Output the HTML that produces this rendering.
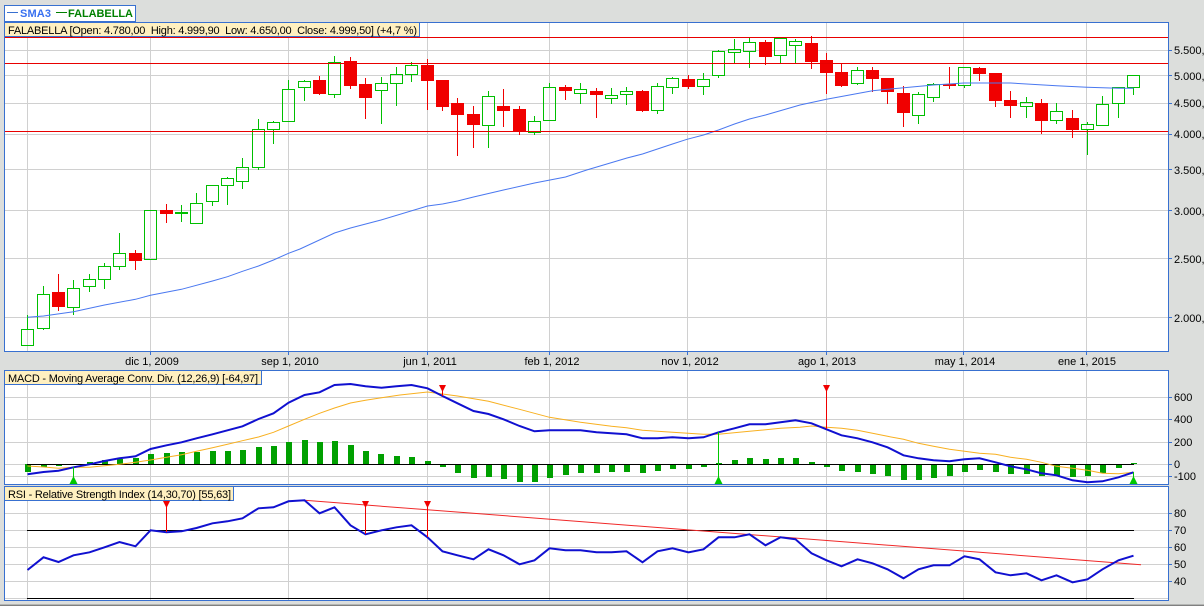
<!DOCTYPE html>
<html><head><meta charset="utf-8"><style>
html,body{margin:0;padding:0;background:#dcdedc;width:1204px;height:606px;overflow:hidden}
svg{display:block}
text{font-family:"Liberation Sans",sans-serif;font-size:11px;fill:#000}
</style></head><body>
<svg width="1204" height="606" viewBox="0 0 1204 606" xmlns="http://www.w3.org/2000/svg">
<rect width="1204" height="606" fill="#dcdedc"/>
<rect y="604" width="1204" height="1" fill="#b4b6b4"/><rect y="605" width="1204" height="1" fill="#808080"/>
<!-- panels -->
<g fill="#fff" stroke="#3870d0" shape-rendering="crispEdges">
<rect x="4.5" y="22.5" width="1164" height="329"/>
<rect x="4.5" y="370.5" width="1164" height="114"/>
<rect x="4.5" y="486.5" width="1164" height="114"/>
<rect x="4.5" y="5.5" width="131" height="16"/>
</g>
<!-- grid -->
<g stroke="#d0d0d0" fill="none" shape-rendering="crispEdges">
<path d="M5 50.5H1168M5 75.5H1168M5 103.5H1168M5 134.5H1168M5 169.5H1168M5 210.5H1168M5 258.5H1168M5 317.5H1168"/>
<path d="M27.5 23V351M150.5 23V351M288.5 23V351M427.5 23V351M549.5 23V351M687.5 23V351M826.5 23V351M963.5 23V351M1086.5 23V351"/>
<path d="M5 397.5H1168M5 419.5H1168M5 442.5H1168M5 464.5H1168M5 476.5H1168"/>
<path d="M27.5 371V484M150.5 371V484M288.5 371V484M427.5 371V484M549.5 371V484M687.5 371V484M826.5 371V484M963.5 371V484M1086.5 371V484"/>
<path d="M5 513.5H1168M5 530.5H1168M5 547.5H1168M5 564.5H1168M5 581.5H1168M5 598.5H1168"/>
<path d="M27.5 487V600M150.5 487V600M288.5 487V600M427.5 487V600M549.5 487V600M687.5 487V600M826.5 487V600M963.5 487V600M1086.5 487V600"/>
</g>
<!-- green candles -->
<path fill="none" stroke="#00bf00" shape-rendering="crispEdges" d="M27.5 315V329M27.5 329.5H33.5V345.5H21.5V329.5H27.5
M43.5 286V294M43.5 328V330M37.5 294.5H49.5V328.5H37.5Z
M73.5 280V288M73.5 307V315M67.5 288.5H79.5V307.5H67.5Z
M89.5 274V279M89.5 287V292M83.5 279.5H95.5V286.5H83.5Z
M104.5 263V266M104.5 279V289M98.5 266.5H110.5V279.5H98.5Z
M119.5 233V253M119.5 266V270M113.5 253.5H125.5V266.5H113.5Z
M144.5 210.5H156.5V259.5H144.5Z
M181.5 205V212M181.5 214V222M175.5 212.5H187.5V213.5H175.5Z
M196.5 193V203M196.5 223V224M190.5 203.5H202.5V223.5H190.5Z
M212.5 201V206M206.5 185.5H218.5V201.5H206.5Z
M227.5 177V178M227.5 185V205M221.5 178.5H233.5V185.5H221.5Z
M242.5 158V167M242.5 181V189M236.5 167.5H248.5V181.5H236.5Z
M258.5 119V129M258.5 167V170M252.5 129.5H264.5V167.5H252.5Z
M273.5 121V122M273.5 129V144M267.5 122.5H279.5V129.5H267.5Z
M288.5 80V89M282.5 89.5H294.5V121.5H282.5Z
M304.5 80V81M304.5 87V101M298.5 81.5H310.5V87.5H298.5Z
M334.5 56V62M334.5 94V98M328.5 62.5H340.5V94.5H328.5Z
M381.5 77V83M381.5 90V124M375.5 83.5H387.5V90.5H375.5Z
M396.5 67V74M396.5 83V106M390.5 74.5H402.5V83.5H390.5Z
M411.5 62V65M411.5 74V82M405.5 65.5H417.5V74.5H405.5Z
M488.5 91V96M488.5 125V148M482.5 96.5H494.5V125.5H482.5Z
M534.5 116V121M534.5 132V135M528.5 121.5H540.5V132.5H528.5Z
M549.5 83V87M543.5 87.5H555.5V120.5H543.5Z
M580.5 83V89M580.5 93V104M574.5 89.5H586.5V93.5H574.5Z
M611.5 88V95M611.5 98V104M605.5 95.5H617.5V98.5H605.5Z
M626.5 87V91M626.5 94V105M620.5 91.5H632.5V94.5H620.5Z
M657.5 83V86M657.5 110V114M651.5 86.5H663.5V110.5H651.5Z
M672.5 77V78M672.5 87V94M666.5 78.5H678.5V87.5H666.5Z
M703.5 73V79M703.5 86V95M697.5 79.5H709.5V86.5H697.5Z
M718.5 50V51M718.5 75V78M712.5 51.5H724.5V75.5H712.5Z
M734.5 39V49M734.5 52V63M728.5 49.5H740.5V52.5H728.5Z
M749.5 38V42M749.5 51V68M743.5 42.5H755.5V51.5H743.5Z
M780.5 55V63M774.5 38.5H786.5V55.5H774.5Z
M795.5 39V41M795.5 45V63M789.5 41.5H801.5V45.5H789.5Z
M857.5 67V70M857.5 83V85M851.5 70.5H863.5V83.5H851.5Z
M918.5 92V94M918.5 115V124M912.5 94.5H924.5V115.5H912.5Z
M933.5 83V84M933.5 97V102M927.5 84.5H939.5V97.5H927.5Z
M964.5 85V88M958.5 67.5H970.5V85.5H958.5Z
M1026.5 97V102M1026.5 106V118M1020.5 102.5H1032.5V106.5H1020.5Z
M1056.5 103V111M1056.5 120V124M1050.5 111.5H1062.5V120.5H1050.5Z
M1087.5 122V124M1087.5 129V155M1081.5 124.5H1093.5V129.5H1081.5Z
M1102.5 96V104M1096.5 104.5H1108.5V125.5H1096.5Z
M1118.5 103V118M1112.5 87.5H1124.5V103.5H1112.5Z
M1133.5 87V95M1127.5 75.5H1139.5V87.5H1127.5Z"/>
<!-- red wicks -->
<path fill="none" stroke="#f00000" shape-rendering="crispEdges" d="M58.5 274V311M135.5 250V270M166.5 204V223M319.5 76V95M350.5 57V89M365.5 78V119M427.5 59V110M442.5 80V111M457.5 98V156M473.5 106V148M503.5 89V127M519.5 106V135M565.5 85V100M596.5 88V118M642.5 90V112M688.5 75V89M765.5 40V65M811.5 36V69M826.5 53V94M841.5 63V87M872.5 67V92M887.5 78V104M903.5 86V127M949.5 67V89M979.5 67V81M995.5 73V107M1010.5 91V118M1041.5 99V134M1072.5 110V138"/>
<!-- red bodies -->
<path fill="#f00000" shape-rendering="crispEdges" d="M52 292h13v15h-13zM129 253h13v8h-13zM160 210h13v4h-13zM313 80h13v14h-13zM344 61h13v25h-13zM359 84h13v14h-13zM421 65h13v16h-13zM436 80h13v27h-13zM451 103h13v12h-13zM467 114h13v11h-13zM497 106h13v5h-13zM513 109h13v22h-13zM559 87h13v4h-13zM590 91h13v4h-13zM636 91h13v20h-13zM682 79h13v8h-13zM759 42h13v15h-13zM805 43h13v19h-13zM820 60h13v13h-13zM835 72h13v14h-13zM866 70h13v9h-13zM881 78h13v14h-13zM897 93h13v20h-13zM943 84h13v2h-13zM973 68h13v6h-13zM989 73h13v28h-13zM1004 100h13v6h-13zM1035 103h13v18h-13zM1066 118h13v12h-13z"/>
<!-- SMA -->
<polyline fill="none" stroke="#4a78f0" stroke-width="1" points="27.5,317.3 43.5,316 73.5,311.7 104.5,305 135.5,299.3 150.5,295.3 181.5,289.3 212.5,281 227.5,276.7 242.5,271.3 258.5,266 273.5,260 288.5,253.3 300,249 334.5,233 350.5,228 381,220 427.5,206 442.5,204 457.5,201 473.5,197 503.5,190 534.5,183 565.5,177 586.7,170 627,158 642.5,154 672.5,144 687,139.3 703.5,135 718.5,130 734.5,124 749.5,119 765.5,115 800,105 826.5,99.3 872.5,90.7 887.5,89.3 933.5,85 964,83 1010.5,83 1056.5,85.7 1087,87.3 1118.5,88.3 1133.5,88.3"/>
<!-- support lines -->
<path stroke="#e80000" fill="none" shape-rendering="crispEdges" d="M5 37.5H1168M5 63.5H1168M5 131.5H1168"/>
<!-- MACD -->
<path fill="#00a000" shape-rendering="crispEdges" d="M25 464h6v8h-6zM41 464h6v3h-6zM56 464h6v2h-6zM87 462h6v2h-6zM102 460h6v4h-6zM117 459h6v5h-6zM133 458h6v6h-6zM148 454h6v10h-6zM164 453h6v11h-6zM179 452h6v12h-6zM194 452h6v12h-6zM210 451h6v13h-6zM225 451h6v13h-6zM240 450h6v14h-6zM256 447h6v17h-6zM271 446h6v18h-6zM286 442h6v22h-6zM302 440h6v24h-6zM317 442h6v22h-6zM332 441h6v23h-6zM348 445h6v19h-6zM363 451h6v13h-6zM378 454h6v10h-6zM394 456h6v8h-6zM409 457h6v7h-6zM425 461h6v3h-6zM440 464h6v3h-6zM455 464h6v9h-6zM471 464h6v14h-6zM486 464h6v13h-6zM501 464h6v15h-6zM517 464h6v18h-6zM532 464h6v18h-6zM547 464h6v14h-6zM563 464h6v11h-6zM578 464h6v9h-6zM594 464h6v9h-6zM609 464h6v8h-6zM624 464h6v8h-6zM640 464h6v9h-6zM655 464h6v7h-6zM670 464h6v5h-6zM686 464h6v5h-6zM701 464h6v3h-6zM716 463h6v1h-6zM732 460h6v4h-6zM747 458h6v6h-6zM763 459h6v5h-6zM778 458h6v6h-6zM793 458h6v6h-6zM809 462h6v2h-6zM824 464h6v3h-6zM839 464h6v7h-6zM855 464h6v8h-6zM870 464h6v10h-6zM885 464h6v12h-6zM901 464h6v16h-6zM916 464h6v16h-6zM931 464h6v14h-6zM947 464h6v12h-6zM962 464h6v8h-6zM977 464h6v6h-6zM993 464h6v8h-6zM1008 464h6v10h-6zM1024 464h6v10h-6zM1039 464h6v12h-6zM1054 464h6v12h-6zM1070 464h6v13h-6zM1085 464h6v12h-6zM1100 464h6v9h-6zM1116 464h6v4h-6zM1131 463h6v1h-6z"/>
<path stroke="#000" fill="none" shape-rendering="crispEdges" d="M27 464.5H1134"/>
<polyline fill="none" stroke="#f8b020" stroke-width="1" points="27.5,466 43.5,467 58.5,468.3 73.5,467.3 89.5,467.3 104.5,465.7 119.5,464.3 135.5,462.3 150.5,460 166.5,457.3 181.5,454.7 196.5,451.3 212.5,447.7 227.5,444.3 242.5,440.7 258.5,437 273.5,432.3 288.5,426 304.5,419.3 319.5,413.3 334.5,408 350.5,403 365.5,400.3 381.5,397.7 400,395 427.5,392 442.5,394 457.5,396 488.5,401.3 519.5,409.3 549.5,417.3 580.5,422.3 611.5,426.3 626.5,427.7 642.5,430.3 672.5,432.3 703.5,434.3 718.5,434.3 749.5,431.3 780.5,428.3 800,427.3 811.5,426 826.5,427.3 841.5,428.3 857.5,430.3 887.5,436.3 903.5,439.3 918.5,443.3 933.5,446.3 949.5,449.3 964.5,451.3 979.5,453.3 995.5,454.3 1010.5,457.3 1026.5,459.3 1041.5,462.3 1056.5,466.3 1072.5,468.3 1087.5,470.3 1102.5,473.3 1118.5,473.7 1133.5,472.3"/>
<polyline fill="none" stroke="#1010d0" stroke-width="2" points="27.5,474.3 43.5,472 58.5,470.7 73.5,467.3 89.5,464.3 104.5,461 119.5,458.3 135.5,456.3 150.5,449 166.5,445.3 181.5,442.3 196.5,438.3 212.5,434.3 227.5,430.3 242.5,426.3 258.5,419 273.5,413.3 288.5,402.7 304.5,395 319.5,392.3 334.5,385 350.5,384 365.5,386.3 381.5,387.7 396.5,386.3 411.5,385 427.5,388.3 442.5,396 457.5,403.3 473.5,411 488.5,414 503.5,419.3 519.5,426 534.5,431.3 549.5,430.3 565.5,430.3 580.5,430.3 596.5,432.3 611.5,433.3 626.5,434.3 642.5,438.3 657.5,438.3 672.5,437.3 688.5,438.3 703.5,437.3 718.5,432.3 734.5,428.3 749.5,424.3 765.5,424.3 780.5,422.3 795.5,420.3 811.5,423.3 826.5,429.3 841.5,435.3 857.5,438.3 872.5,442.3 887.5,447.3 903.5,455.3 918.5,458.3 933.5,460.3 949.5,461.3 964.5,459.3 979.5,458.3 995.5,462.3 1010.5,466.3 1026.5,469.3 1041.5,473.3 1056.5,475.3 1072.5,480.3 1087.5,482.3 1102.5,481.3 1118.5,477.3 1133.5,472.3"/>
<path stroke="#00c800" fill="none" shape-rendering="crispEdges" d="M73.5 467V484M718.5 432V484M1133.5 472V484"/>
<path fill="#00c800" d="M73.5 476L77.5 484H69.5ZM718.5 476L722.5 484H714.5ZM1133.5 476L1137.5 484H1129.5Z"/>
<path stroke="#f00000" fill="none" shape-rendering="crispEdges" d="M442.5 390V396M826.5 390V429"/>
<path fill="#f00000" d="M439 385H446L442.5 392ZM823 385H830L826.5 392Z"/>
<!-- RSI -->
<path stroke="#000" fill="none" shape-rendering="crispEdges" d="M27 530.5H1134M27 598.5H1134"/>
<polyline fill="none" stroke="#f02828" stroke-width="1" points="304.5,500.3 1141,564.7"/>
<polyline fill="none" stroke="#1010d0" stroke-width="2" points="27.5,570 43.5,557.3 58.5,562 73.5,555.3 89.5,552.3 104.5,547.3 119.5,542 135.5,546.3 150.5,530.3 166.5,532.3 181.5,531.3 196.5,528 212.5,523.3 227.5,521.3 242.5,518.3 258.5,508.3 273.5,507.3 288.5,501.3 304.5,500.3 319.5,513.3 334.5,507.3 350.5,525.3 365.5,534.3 381.5,530.3 396.5,527.3 411.5,525.3 427.5,537.3 442.5,551.3 457.5,555.3 473.5,559.3 488.5,549.3 503.5,555.3 519.5,564.3 534.5,560.3 549.5,548.3 565.5,550.3 580.5,550.3 596.5,552.3 611.5,552.3 626.5,551.3 642.5,562.3 657.5,551.3 672.5,548.3 688.5,552.3 703.5,549.3 718.5,537.3 734.5,537.3 749.5,534.3 765.5,545.3 780.5,537.3 795.5,539.3 811.5,553.3 826.5,560.3 841.5,566.3 857.5,559.3 872.5,563.3 887.5,569.3 903.5,578.3 918.5,569.3 933.5,565.3 949.5,565.3 964.5,556.3 979.5,559.3 995.5,572.3 1010.5,575.3 1026.5,573.3 1041.5,580.3 1056.5,575.3 1072.5,582.3 1087.5,579.3 1102.5,569.3 1118.5,560.3 1133.5,555.7"/>
<path stroke="#f00000" fill="none" shape-rendering="crispEdges" d="M166.5 505V532M365.5 505V534M427.5 505V537"/>
<path fill="#f00000" d="M163 501H170L166.5 508ZM362 501H369L365.5 508ZM424 501H431L427.5 508Z"/>
<!-- axis ticks -->
<path stroke="#3870d0" fill="none" shape-rendering="crispEdges" d="M1168 50.5h4M1168 75.5h4M1168 103.5h4M1168 134.5h4M1168 169.5h4M1168 210.5h4M1168 258.5h4M1168 317.5h4M1168 397.5h4M1168 419.5h4M1168 442.5h4M1168 464.5h4M1168 476.5h4M1168 513.5h4M1168 530.5h4M1168 547.5h4M1168 564.5h4M1168 581.5h4M150.5 351v4M288.5 351v4M427.5 351v4M549.5 351v4M687.5 351v4M826.5 351v4M963.5 351v4M1086.5 351v4"/>
<!-- titles -->
<g stroke="#3870d0" fill="#fff0c0" shape-rendering="crispEdges">
<rect x="4.5" y="22.5" width="415" height="14"/>
<rect x="4.5" y="370.5" width="257" height="14"/>
<rect x="4.5" y="486.5" width="229" height="14"/>
</g>
<text x="8" y="34" textLength="409" lengthAdjust="spacing">FALABELLA [Open: 4.780,00&#160; High: 4.999,90&#160; Low: 4.650,00&#160; Close: 4.999,50] (+4,7 %)</text>
<text x="8" y="382" textLength="250" lengthAdjust="spacing">MACD - Moving Average Conv. Div. (12,26,9) [-64,97]</text>
<text x="8" y="498" textLength="223" lengthAdjust="spacing">RSI - Relative Strength Index (14,30,70) [55,63]</text>
<!-- legend -->
<path stroke="#3870d0" shape-rendering="crispEdges" d="M7 12.5H18"/>
<path stroke="#008000" shape-rendering="crispEdges" d="M56 12.5H67"/>
<text x="20" y="17" textLength="31" lengthAdjust="spacing" style="font-weight:bold;fill:#3870f0">SMA3</text>
<text x="68" y="17" textLength="65" lengthAdjust="spacing" style="font-weight:bold;fill:#008000">FALABELLA</text>
<!-- y labels -->
<text x="1174" y="54">5.500,00</text><text x="1174" y="80">5.000,00</text><text x="1174" y="107">4.500,00</text><text x="1174" y="138">4.000,00</text><text x="1174" y="174">3.500,00</text><text x="1174" y="215">3.000,00</text><text x="1174" y="263">2.500,00</text><text x="1174" y="322">2.000,00</text>
<text x="1174" y="401">600</text><text x="1174" y="423">400</text><text x="1174" y="446">200</text><text x="1174" y="468">0</text><text x="1174" y="480">-100</text>
<text x="1174" y="517">80</text><text x="1174" y="534">70</text><text x="1174" y="551">60</text><text x="1174" y="568">50</text><text x="1174" y="585">40</text>
<!-- x labels -->
<g text-anchor="middle">
<text x="152" y="365">dic 1, 2009</text><text x="290" y="365">sep 1, 2010</text><text x="430" y="365">jun 1, 2011</text><text x="552" y="365">feb 1, 2012</text><text x="690" y="365">nov 1, 2012</text><text x="827" y="365">ago 1, 2013</text><text x="965" y="365">may 1, 2014</text><text x="1087" y="365">ene 1, 2015</text>
</g>
</svg>
</body></html>
